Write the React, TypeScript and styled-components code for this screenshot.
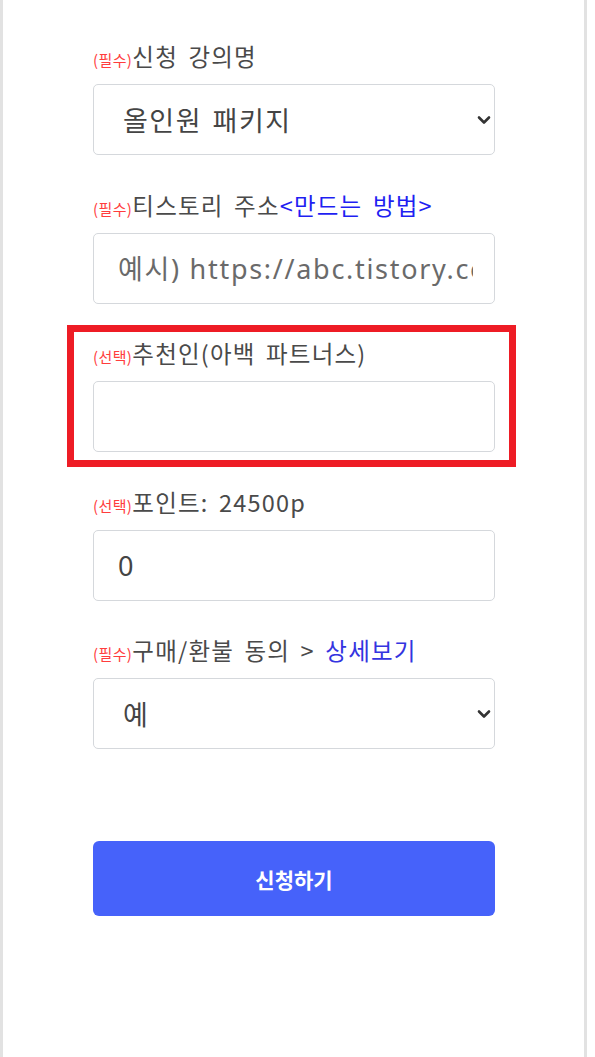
import React from "react";
import styled, { createGlobalStyle } from "styled-components";

const GlobalStyle = createGlobalStyle`
  html, body { margin: 0; padding: 0; background: #ffffff; }
  body { font-family: "Noto Sans CJK KR", "Noto Sans", sans-serif; }
  * { box-sizing: border-box; }
`;

const Page = styled.div`
  width: 587px;
  min-height: 1057px;
  border-left: 3px solid #e2e2e2;
  border-right: 3px solid #e2e2e2;
  background: #ffffff;
  padding: 41px 89px 0 90px;
  display: flex;
  flex-direction: column;
`;

const Form = styled.form`
  display: flex;
  flex-direction: column;
  gap: 34.5px;
`;

const Group = styled.div`
  position: relative;
  display: flex;
  flex-direction: column;
  gap: 13px;
`;

const Highlight = styled.div`
  position: absolute;
  top: -13px;
  bottom: -15px;
  left: -26px;
  right: -21px;
  border: 7px solid #ee1c25;
  pointer-events: none;
`;

const Label = styled.label`
  display: block;
  height: 30px;
  line-height: 30px;
  font-size: 23.5px;
  letter-spacing: 1.2px;
  word-spacing: 4px;
  color: #4a4a4a;
  white-space: nowrap;
`;

const Tag = styled.span`
  font-size: 15px;
  letter-spacing: 0.4px;
  word-spacing: 0;
  color: #ff3d3d;
`;

const Link = styled.a<{ $tone?: "bright" | "deep" }>`
  color: ${(p) => (p.$tone === "deep" ? "#3434e0" : "#1f1ff2")};
  text-decoration: none;
`;

const fieldBase = `
  width: 100%;
  height: 71px;
  border: 1.5px solid #d5d8dc;
  border-radius: 5px;
  background: #ffffff;
  font-size: 27px;
  color: #444444;
  outline: none;
`;

const Input = styled.input`
  ${fieldBase}
  font-family: "Noto Sans", "Noto Sans CJK KR", sans-serif;
  letter-spacing: 1.7px;
  padding: 0 21px 0 24px;
  &::placeholder { color: #6a6a6a; }
`;

const SelectWrap = styled.div`
  position: relative;
  width: 100%;
`;

const Select = styled.select`
  ${fieldBase}
  font-family: "Noto Sans CJK KR", "Noto Sans", sans-serif;
  letter-spacing: 1.5px;
  word-spacing: 3px;
  appearance: none;
  -webkit-appearance: none;
  padding: 0 40px 0 29px;
`;

const Chevron = styled.svg`
  position: absolute;
  right: 4px;
  top: 50%;
  transform: translateY(-50%);
  width: 14px;
  height: 10px;
  pointer-events: none;
`;

const SubmitButton = styled.button`
  margin-top: 92px;
  width: 100%;
  height: 75px;
  border: none;
  border-radius: 6px;
  background: #4662fa;
  color: #ffffff;
  font-family: "Noto Sans CJK KR", "Noto Sans", sans-serif;
  font-size: 21px;
  font-weight: 700;
  cursor: pointer;
`;

const ChevronIcon = () => (
  <Chevron viewBox="0 0 14 10" aria-hidden>
    <path d="M2 2.5 L7 7.5 L12 2.5" fill="none" stroke="#333" strokeWidth="2.6" strokeLinecap="round" strokeLinejoin="round" />
  </Chevron>
);

export default function App() {
  return (
    <>
      <GlobalStyle />
      <Page>
        <Form onSubmit={(e) => e.preventDefault()}>
          <Group>
            <Label>
              <Tag>(필수)</Tag>신청 강의명
            </Label>
            <SelectWrap>
              <Select defaultValue="all">
                <option value="all">올인원 패키지</option>
              </Select>
              <ChevronIcon />
            </SelectWrap>
          </Group>

          <Group>
            <Label>
              <Tag>(필수)</Tag>티스토리 주소<Link href="#" $tone="bright">&lt;만드는 방법&gt;</Link>
            </Label>
            <Input placeholder="예시) https://abc.tistory.com" />
          </Group>

          <Group>
            <Highlight />
            <Label>
              <Tag>(선택)</Tag>추천인(아백 파트너스)
            </Label>
            <Input />
          </Group>

          <Group>
            <Label>
              <Tag>(선택)</Tag>포인트: 24500p
            </Label>
            <Input defaultValue="0" />
          </Group>

          <Group>
            <Label>
              <Tag>(필수)</Tag>구매/환불 동의 &gt; <Link href="#" $tone="deep">상세보기</Link>
            </Label>
            <SelectWrap>
              <Select defaultValue="yes">
                <option value="yes">예</option>
              </Select>
              <ChevronIcon />
            </SelectWrap>
          </Group>
        </Form>
        <SubmitButton type="button">신청하기</SubmitButton>
      </Page>
    </>
  );
}
